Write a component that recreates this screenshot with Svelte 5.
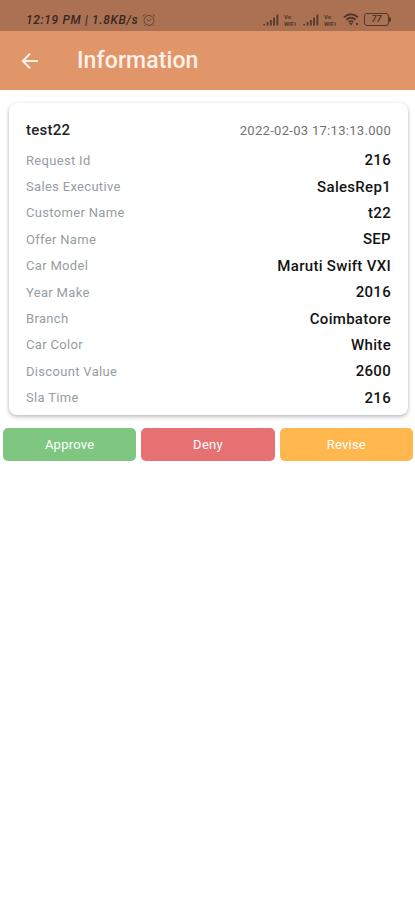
<script lang="ts">
  type Row = { label: string; value: string };
  type Action = { label: string; kind: string };

  const request = {
    name: "test22",
    createdAt: "2022-02-03 17:13:13.000",
  };

  const rows: Row[] = [
    { label: "Request Id", value: "216" },
    { label: "Sales Executive", value: "SalesRep1" },
    { label: "Customer Name", value: "t22" },
    { label: "Offer Name", value: "SEP" },
    { label: "Car Model", value: "Maruti Swift VXI" },
    { label: "Year Make", value: "2016" },
    { label: "Branch", value: "Coimbatore" },
    { label: "Car Color", value: "White" },
    { label: "Discount Value", value: "2600" },
    { label: "Sla Time", value: "216" },
  ];

  const actions: Action[] = [
    { label: "Approve", kind: "approve" },
    { label: "Deny", kind: "deny" },
    { label: "Revise", kind: "revise" },
  ];
</script>

{#snippet signal()}
  <svg class="signal" width="16" height="12" viewBox="0 0 16 12">
    <path d="M1.2 11.5V10M4.5 11.5V8.2M7.8 11.5V6M11.1 11.5V3.5M14.4 11.5V.5" />
  </svg>
{/snippet}

{#snippet vowifi()}
  <span class="vowifi"><span>Vo</span><span>WiFi</span></span>
{/snippet}

<div class="screen">
  <div class="status">
    <span class="clock">12:19 PM | 1.8KB/s</span>
    <svg class="alarm" width="14" height="14" viewBox="0 0 14 14">
      <circle cx="7" cy="7.4" r="5" />
      <path d="M1 3.2 3.4 1.2M13 3.2l-2.4-2M4.8 6.5 7 8l2.2-1.8M3.3 11.5l-1 1.3M10.7 11.5l1 1.3" />
    </svg>
    <div class="indicators">
      {@render signal()}
      {@render vowifi()}
      {@render signal()}
      {@render vowifi()}
      <svg class="wifi" width="17" height="13" viewBox="0 0 17 13">
        <path d="M1 4.2Q8-1.6 15 4.2M3.3 6.7q4.7-3.8 9.4 0M5.6 9.1q2.4-1.9 4.8 0" />
        <path class="solid" d="M6.2 10h3.6L8 12.4zM13 10h2v2h-2z" />
      </svg>
      <span class="battery">77</span>
    </div>
  </div>

  <header class="toolbar">
    <button class="back" type="button" aria-label="Back">
      <svg width="18" height="18" viewBox="0 0 18 18">
        <path d="M17 9H2M9 1.8 1.8 9 9 16.2" />
      </svg>
    </button>
    <h1>Information</h1>
  </header>

  <section class="card">
    <div class="card-head">
      <span class="name">{request.name}</span>
      <span class="date">{request.createdAt}</span>
    </div>
    {#each rows as row}
      <div class="row">
        <span class="label">{row.label}</span>
        <span class="value">{row.value}</span>
      </div>
    {/each}
  </section>

  <div class="actions">
    {#each actions as action}
      <button class={action.kind} type="button">{action.label}</button>
    {/each}
  </div>
</div>

<style>
  :global(body) {
    margin: 0;
    background: #fff;
  }
  .screen {
    min-height: 900px;
    background: #fff;
    font-family: Roboto, sans-serif;
  }
  .status {
    display: flex;
    align-items: center;
    box-sizing: border-box;
    height: 31px;
    padding: 8px 26px 0 26px;
    background: #ab7153;
    color: #39271e;
  }
  .clock {
    width: 113px;
    font-size: 12px;
    font-style: italic;
    font-weight: 500;
    letter-spacing: 0.65px;
    white-space: nowrap;
  }
  svg {
    display: block;
    flex: none;
    fill: none;
    stroke: currentColor;
  }
  .alarm {
    margin-left: 3px;
    color: #634332;
  }
  .indicators {
    display: flex;
    align-items: center;
    margin-left: auto;
    color: #533729;
  }
  .signal {
    stroke-width: 1.8;
  }
  .vowifi {
    display: flex;
    flex-direction: column;
    width: 15px;
    margin: 0 4px 0 5px;
    font-size: 6px;
    font-weight: 700;
    line-height: 7px;
  }
  .wifi {
    margin-right: 4px;
    stroke-width: 1.8;
  }
  .solid {
    fill: currentColor;
    stroke: none;
  }
  .battery {
    position: relative;
    box-sizing: border-box;
    width: 25px;
    height: 13px;
    border: 1.5px solid #533729;
    border-radius: 3px;
    font-size: 9px;
    font-style: italic;
    font-weight: 700;
    line-height: 11px;
    text-align: center;
  }
  .battery::after {
    content: "";
    position: absolute;
    top: 3px;
    right: -3px;
    width: 2px;
    height: 5px;
    border-radius: 0 2px 2px 0;
    background: #533729;
  }
  .toolbar {
    display: flex;
    align-items: center;
    height: 59px;
    padding-left: 21px;
    background: #e1966a;
    color: #fff0e9;
  }
  .back {
    appearance: none;
    width: 18px;
    padding: 0;
    border: 0;
    background: transparent;
    color: inherit;
    cursor: pointer;
  }
  .back svg {
    stroke-width: 2;
  }
  h1 {
    margin: 0 0 0 38px;
    font-size: 23px;
    font-weight: 500;
    line-height: 28px;
    letter-spacing: 0.1px;
  }
  .card {
    box-sizing: border-box;
    height: 312px;
    margin: 13px 7px 0 9px;
    padding: 13px 17px 0;
    border-radius: 8px;
    background: #fff;
    box-shadow:
      0 2px 4px rgba(0, 0, 0, 0.24),
      0 0 3px rgba(0, 0, 0, 0.08);
  }
  .card-head,
  .row {
    display: flex;
    align-items: center;
    justify-content: space-between;
  }
  .card-head {
    height: 28px;
    margin-bottom: 3px;
  }
  .row {
    height: 26.4px;
  }
  .name {
    color: #242424;
    font-size: 15px;
    font-weight: 500;
    letter-spacing: 0.25px;
  }
  .date {
    color: #727272;
    font-size: 13px;
    letter-spacing: 0.3px;
  }
  .label {
    color: #979da2;
    font-size: 13px;
    letter-spacing: 0.32px;
  }
  .value {
    color: #141414;
    font-size: 15px;
    font-weight: 500;
    letter-spacing: 0.3px;
  }
  .actions {
    display: grid;
    grid-template-columns: repeat(3, 1fr);
    gap: 5px;
    padding: 13px 2px 0 3px;
  }
  .actions button {
    height: 33px;
    padding: 0;
    border: 0;
    border-radius: 5px;
    color: #fff;
    font: 400 13px Roboto, sans-serif;
    letter-spacing: 0.25px;
    cursor: pointer;
  }
  .approve {
    background: #7fc781;
  }
  .deny {
    background: #e57173;
  }
  .revise {
    background: #ffb74e;
  }
</style>
